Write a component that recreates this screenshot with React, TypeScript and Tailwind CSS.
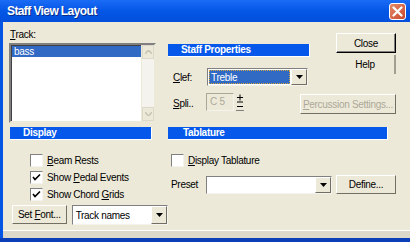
import React from 'react';

const font = { fontFamily: '"Liberation Sans", Arial, sans-serif' };

const Header = ({ label, className = '' }: { label: string; className?: string }) => (
  <div className={`h-[13px] bg-[#0558EA] border-r border-b border-white text-white font-bold text-[10px] leading-[12px] ${className}`}>
    {label}
  </div>
);

const Btn = ({ children, className = '', disabled = false, isDefault = false }: { children: React.ReactNode; className?: string; disabled?: boolean; isDefault?: boolean }) => (
  <div
    className={`flex items-center justify-center whitespace-nowrap bg-[#ECE9D8] border border-t-white border-l-white text-[10px] ${
      isDefault ? 'border-r-black border-b-black shadow-[inset_-1px_-1px_0_#808080]' : 'border-r-[#716F64] border-b-[#716F64]'
    } ${disabled ? 'text-[#ACA899]' : 'text-black'} ${className}`}
  >
    {children}
  </div>
);

const Check = ({ label, checked = false }: { label: React.ReactNode; checked?: boolean }) => (
  <div className="flex items-center h-[13px] gap-[4px] text-black">
    <div className="w-[13px] h-[13px] bg-white border border-t-[#808080] border-l-[#808080] border-r-[#F4F3EE] border-b-[#F4F3EE] flex items-center justify-center">
      {checked && (
        <svg width="9" height="9" viewBox="0 0 9 9">
          <path d="M1 4 L3 6.5 L8 1.5" stroke="#000" strokeWidth="1.6" fill="none" />
        </svg>
      )}
    </div>
    <span>{label}</span>
  </div>
);

const Arrow = () => (
  <svg width="7" height="4" viewBox="0 0 7 4">
    <path d="M0 0 H7 L3.5 4 Z" fill="#000" />
  </svg>
);

const Combo = ({ value, selected = false, className = '' }: { value?: string; selected?: boolean; className?: string }) => (
  <div className={`flex h-[18px] bg-white border border-t-[#808080] border-l-[#808080] border-r-[#F4F3EE] border-b-[#F4F3EE] ${className}`}>
    <div className="flex-1 p-[1px]">
      {value && (
        <div
          className={`h-full flex items-center px-[2px] ${
            selected ? 'bg-[#316AC5] text-white outline-1 outline-dotted outline-[#D4A53B] -outline-offset-1' : 'text-black'
          }`}
        >
          {value}
        </div>
      )}
    </div>
    <Btn className="w-[16px] h-full">
      <Arrow />
    </Btn>
  </div>
);

export default function App() {
  return (
    <div className="w-[410px] h-[242px] flex flex-col bg-[#0555E4] overflow-hidden tracking-[-0.3px]" style={font}>
      {/* title bar */}
      <div className="h-[22px] shrink-0 flex items-center pl-[7px] pr-[4px] bg-gradient-to-b from-[#1A6BF5] via-[#0456E6] to-[#0350DC]">
        <span className="text-white font-bold text-[12px] tracking-[-0.6px] [text-shadow:1px_1px_0_#0A2C8A]">Staff View Layout</span>
        <div className="ml-auto w-[17px] h-[17px] rounded-[3px] border border-white bg-gradient-to-br from-[#E58A6A] to-[#C9452A] flex items-center justify-center">
          <svg width="11" height="11" viewBox="0 0 11 11">
            <path d="M1.5 1.5 L9.5 9.5 M9.5 1.5 L1.5 9.5" stroke="#fff" strokeWidth="2.2" strokeLinecap="round" />
          </svg>
        </div>
      </div>

      <div className="flex flex-1 min-h-0">
        <div className="w-[3px] bg-[#0555E4]" />
        <div className="flex-1 flex flex-col bg-[#ECE9D8]">
          <div className="flex-1 flex text-[10px] text-black">
            {/* left column */}
            <div className="w-[165px] shrink-0 pl-[6px] flex flex-col">
              <div className="mt-[6px] pl-[1px] h-[13px] leading-[13px]"><u>T</u>rack:</div>
              <div className="mt-[2px] w-[147px] h-[80px] flex bg-white border-2 border-t-[#808080] border-l-[#808080] border-r-[#ECE9D8] border-b-[#ECE9D8] shadow-[inset_1px_1px_0_#404040]">
                <div className="flex-1 pt-[1px] pl-[1px]">
                  <div className="h-[11px] bg-[#316AC5] text-white leading-[11px] pl-[2px]">bass</div>
                </div>
                <div className="w-[13px] flex flex-col bg-[#F4F3EE] border-l border-[#ECE9D8]">
                  <div className="h-[14px] border border-[#DCD9CA] bg-[#ECE9D8] flex items-center justify-center">
                    <svg width="7" height="4" viewBox="0 0 7 4"><path d="M0 4 L3.5 0 L7 4" stroke="#C8C5B5" strokeWidth="1.5" fill="none" /></svg>
                  </div>
                  <div className="flex-1" />
                  <div className="h-[14px] border border-[#DCD9CA] bg-[#ECE9D8] flex items-center justify-center">
                    <svg width="7" height="4" viewBox="0 0 7 4"><path d="M0 0 L3.5 4 L7 0" stroke="#C8C5B5" strokeWidth="1.5" fill="none" /></svg>
                  </div>
                </div>
              </div>
              <Header label="Display" className="mt-[4px] ml-[1px] w-[142px] pl-[13px]" />
              <div className="mt-[14px] pl-[21px] flex flex-col gap-[4px]">
                <Check label={<><u>B</u>eam Rests</>} />
                <Check checked label={<>Show <u>P</u>edal Events</>} />
                <Check checked label={<>Show Chord <u>G</u>rids</>} />
              </div>
              <div className="mt-[4px] pl-[3px] flex gap-[5px]">
                <Btn className="w-[60px] h-[19px] border-t-white"><span>Set <u>F</u>ont...</span></Btn>
                <Combo value="Track names" className="w-[106px] h-[20px]" />
              </div>
            </div>

            {/* right column */}
            <div className="flex-1 flex flex-col pr-[14px]">
              <div className="flex">
                <div className="w-[142px] flex flex-col">
                  <Header label="Staff Properties" className="mt-[22px] pl-[13px]" />
                  <div className="mt-[11px] flex items-center">
                    <span className="w-[39px] pl-[5px]"><u>C</u>lef:</span>
                    <Combo value="Treble" selected className="w-[101px]" />
                  </div>
                </div>
                <div className="ml-auto w-[60px] flex flex-col pt-[11px]">
                  <Btn isDefault className="h-[20px]">Close</Btn>
                  <div className="mt-[2px] h-[19px] flex items-center justify-center border-r-2 border-[#A19F92]">Help</div>
                </div>
              </div>
              <div className="mt-[7px] flex items-start">
                <span className="w-[38px] pl-[5px] pt-[3px]"><u>S</u>pli..</span>
                <div className="w-[28px] h-[18px] border border-t-[#ACA899] border-l-[#ACA899] border-r-[#F4F3EE] border-b-[#F4F3EE] text-[#ACA899] pl-[3px] leading-[16px]">C 5</div>
                <svg className="ml-[2px]" width="8" height="18" viewBox="0 0 8 18">
                  <path d="M1 4.5 H7 M4 1.5 V7.5 M1 9 H7 M1 13.5 H7" stroke="#000" strokeWidth="1" fill="none" />
                  <path d="M0 17.5 H8" stroke="#808080" strokeWidth="1" />
                </svg>
                <Btn disabled className="ml-auto mt-[1px] w-[96px] h-[20px]"><span><u>P</u>ercussion Settings...</span></Btn>
              </div>
              <Header label="Tablature" className="mt-[13px] w-[220px] pl-[15px]" />
              <div className="mt-[14px] pl-[3px]">
                <Check label={<><u>D</u>isplay Tablature</>} />
              </div>
              <div className="mt-[8px] flex items-center">
                <span className="w-[38px] pl-[3px]">Preset</span>
                <Combo className="w-[126px]" />
                <Btn className="ml-auto w-[60px] h-[19px]">Define...</Btn>
              </div>
            </div>
          </div>
          <div className="h-[8px] border-t border-white bg-[#DCD9CB]" />
        </div>
      </div>
      <div className="h-[4px] bg-[#0A3FB8]" />
    </div>
  );
}
